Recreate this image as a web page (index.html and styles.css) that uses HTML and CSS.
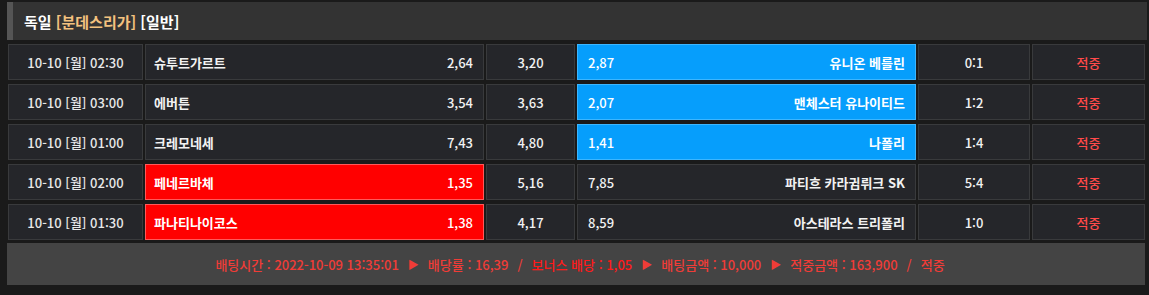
FILE: index.html
```html
<!DOCTYPE html>
<html lang="ko">
<head>
<meta charset="utf-8">
<link rel="stylesheet" href="styles.css">
</head>
<body>
<div class="wrap">
  <div class="header">
    <span class="title">독일 <span class="league">[분데스리가]</span> [일반]</span>
  </div>
  <div class="table">
    <div class="cell date">10-10 [월] 02:30</div>
    <div class="cell home"><span>슈투트가르트</span><span>2,64</span></div>
    <div class="cell draw">3,20</div>
    <div class="cell away pick-blue"><span>2,87</span><span>유니온 베를린</span></div>
    <div class="cell score">0:1</div>
    <div class="cell result">적중</div>

    <div class="cell date">10-10 [월] 03:00</div>
    <div class="cell home"><span>에버튼</span><span>3,54</span></div>
    <div class="cell draw">3,63</div>
    <div class="cell away pick-blue"><span>2,07</span><span>맨체스터 유나이티드</span></div>
    <div class="cell score">1:2</div>
    <div class="cell result">적중</div>

    <div class="cell date">10-10 [월] 01:00</div>
    <div class="cell home"><span>크레모네세</span><span>7,43</span></div>
    <div class="cell draw">4,80</div>
    <div class="cell away pick-blue"><span>1,41</span><span>나폴리</span></div>
    <div class="cell score">1:4</div>
    <div class="cell result">적중</div>

    <div class="cell date">10-10 [월] 02:00</div>
    <div class="cell home pick-red"><span>페네르바체</span><span>1,35</span></div>
    <div class="cell draw">5,16</div>
    <div class="cell away"><span>7,85</span><span>파티흐 카라귐뤼크 SK</span></div>
    <div class="cell score">5:4</div>
    <div class="cell result">적중</div>

    <div class="cell date">10-10 [월] 01:30</div>
    <div class="cell home pick-red"><span>파나티나이코스</span><span>1,38</span></div>
    <div class="cell draw">4,17</div>
    <div class="cell away"><span>8,59</span><span>아스테라스 트리폴리</span></div>
    <div class="cell score">1:0</div>
    <div class="cell result">적중</div>
  </div>
  <div class="footer">
    <span>배팅시간 : 2022-10-09 13:35:01</span>
    <span class="arrow">▶</span>
    <span>배당률 : 16,39</span>
    <span class="slash">/</span>
    <span class="bonus">보너스 배당 : 1,05</span>
    <span class="arrow">▶</span>
    <span>배팅금액 : 10,000</span>
    <span class="arrow">▶</span>
    <span>적중금액 : 163,900</span>
    <span class="slash">/</span>
    <span>적중</span>
  </div>
</div>
</body>
</html>
```
FILE: styles.css
```css
html, body {
  margin: 0;
  padding: 0;
  background: #1a1a1a;
}
body {
  font-family: "Noto Sans CJK KR", "Noto Sans", sans-serif;
  font-size: 13px;
  font-weight: 500;
  color: #f0f0f0;
}
.wrap {
  padding: 2px 2px 0 7px;
  width: 1140px;
}
.header {
  height: 38px;
  background: #333333;
  border-left: 6px solid #555555;
  display: flex;
  align-items: center;
  padding-left: 11px;
  box-sizing: border-box;
}
.title {
  font-size: 15px;
  font-weight: bold;
  color: #ffffff;
}
.league {
  color: #f3c27f;
}
.table {
  margin: 4px 0 0 1px;
  width: 1137px;
  display: grid;
  grid-template-columns: 135px 339px 89px 339px 112px 113px;
  grid-auto-rows: 36px;
  gap: 4px 2px;
}
.cell {
  background: #25262a;
  border: 1px solid #393a3c;
  box-sizing: border-box;
  display: flex;
  align-items: center;
  color: #f2f2f2;
}
.date, .draw, .score, .result {
  justify-content: center;
}
.date {
  color: #e8e8e8;
}
.home, .away {
  justify-content: space-between;
  padding: 0 10px 0 8px;
}
.away {
  padding: 0 10px 0 10px;
}
.home span:first-child, .away span:last-child {
  font-weight: bold;
}
.result {
  color: #ff4a4a;
}
.pick-blue {
  background: #069efc;
  border-color: #3cb6ff;
  color: #ffffff;
}
.pick-red {
  background: #ff0000;
  border-color: #ff5a5a;
  color: #ffffff;
}
.footer {
  margin-top: 3px;
  width: 1138px;
  height: 42px;
  background: #444444;
  display: flex;
  align-items: center;
  justify-content: center;
  gap: 9px;
  color: #f03c37;
  font-size: 13px;
  padding-left: 8px;
  box-sizing: border-box;
}
.footer .bonus {
  color: #ff1a1a;
}
.footer .arrow {
  font-size: 11px;
}
```
